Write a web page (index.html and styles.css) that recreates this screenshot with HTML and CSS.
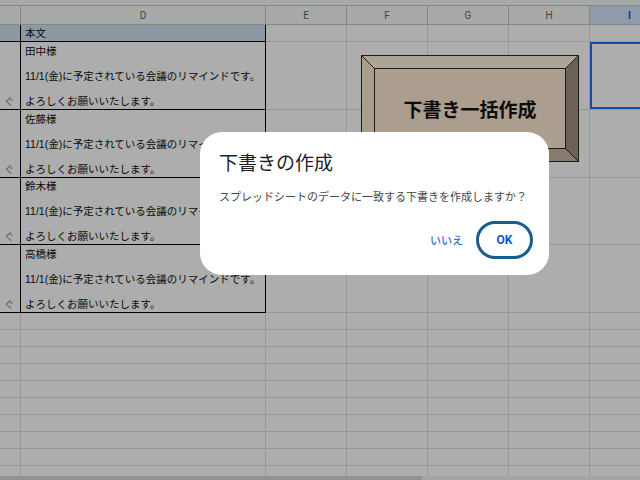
FILE: index.html
```html
<!DOCTYPE html>
<html lang="ja">
<head>
<meta charset="utf-8">
<title>下書きの作成</title>
<link rel="stylesheet" href="styles.css">
</head>
<body>
<div class="app">
  <div class="topstrip"></div>
  <div class="sheet">
    <table class="grid">
      <colgroup>
        <col class="w-c"><col class="w-d"><col class="w-e"><col class="w-f"><col class="w-g"><col class="w-h"><col class="w-i">
      </colgroup>
      <thead>
        <tr class="hdr"><th></th><th>D</th><th>E</th><th>F</th><th>G</th><th>H</th><th class="sel">I</th></tr>
      </thead>
      <tbody>
        <tr class="r"><td class="fr hd"></td><td class="fr hd">本文</td><td></td><td></td><td></td><td></td><td></td></tr>
        <tr class="tall"><td class="fr side">ぐ</td><td class="fr body">田中様<br><br>11/1(金)に予定されている会議のリマインドです。<br><br>よろしくお願いいたします。</td><td></td><td></td><td></td><td></td><td class="active"></td></tr>
        <tr class="tall"><td class="fr side">ぐ</td><td class="fr body">佐藤様<br><br>11/1(金)に予定されている会議のリマインドです。<br><br>よろしくお願いいたします。</td><td></td><td></td><td></td><td></td><td></td></tr>
        <tr class="tall t67"><td class="fr side">ぐ</td><td class="fr body">鈴木様<br><br>11/1(金)に予定されている会議のリマインドです。<br><br>よろしくお願いいたします。</td><td></td><td></td><td></td><td></td><td></td></tr>
        <tr class="tall"><td class="fr side">ぐ</td><td class="fr body">高橋様<br><br>11/1(金)に予定されている会議のリマインドです。<br><br>よろしくお願いいたします。</td><td></td><td></td><td></td><td></td><td></td></tr>
        <tr class="r"><td></td><td></td><td></td><td></td><td></td><td></td><td></td></tr>
        <tr class="r"><td></td><td></td><td></td><td></td><td></td><td></td><td></td></tr>
        <tr class="r"><td></td><td></td><td></td><td></td><td></td><td></td><td></td></tr>
        <tr class="r"><td></td><td></td><td></td><td></td><td></td><td></td><td></td></tr>
        <tr class="r"><td></td><td></td><td></td><td></td><td></td><td></td><td></td></tr>
        <tr class="r"><td></td><td></td><td></td><td></td><td></td><td></td><td></td></tr>
        <tr class="r"><td></td><td></td><td></td><td></td><td></td><td></td><td></td></tr>
        <tr class="r"><td></td><td></td><td></td><td></td><td></td><td></td><td></td></tr>
        <tr class="r"><td></td><td></td><td></td><td></td><td></td><td></td><td></td></tr>
        <tr class="r"><td></td><td></td><td></td><td></td><td></td><td></td><td></td></tr>
      </tbody>
    </table>
    <div class="drawing">
      <svg class="bevel" width="218" height="107" viewBox="0 0 218 107">
        <polygon points="0,0 218,0 205,13 13,13" fill="#fff0de"/>
        <polygon points="0,0 13,13 13,94 0,107" fill="#fbe7d1"/>
        <polygon points="218,0 218,107 205,94 205,13" fill="#9e9281"/>
        <polygon points="0,107 13,94 205,94 218,107" fill="#c6b6a1"/>
        <rect x="13" y="13" width="192" height="81" fill="#fce9d3"/>
        <g stroke="#2a2a2a" stroke-width="1" fill="none">
          <rect x="0.5" y="0.5" width="217" height="106"/>
          <rect x="13.5" y="13.5" width="191" height="80"/>
          <path d="M0.5 0.5 L13.5 13.5 M217.5 0.5 L204.5 13.5 M0.5 106.5 L13.5 93.5 M217.5 106.5 L204.5 93.5"/>
        </g>
      </svg>
      <span class="drawing-label">下書き一括作成</span>
    </div>
  </div>
  <div class="hscroll"><div class="thumb"></div></div>
</div>
<div class="scrim"></div>
<div class="dialog" role="dialog">
  <h2 class="dlg-title">下書きの作成</h2>
  <p class="dlg-msg">スプレッドシートのデータに一致する下書きを作成しますか？</p>
  <div class="dlg-actions">
    <button class="btn-text">いいえ</button>
    <button class="btn-ok">OK</button>
  </div>
</div>
</body>
</html>
```
FILE: styles.css
```css
body {
  margin: 0;
  font-family: "Liberation Sans", "Noto Sans CJK JP", sans-serif;
  background: #fff;
}

.app {
  width: 640px;
  height: 480px;
  display: flex;
  flex-direction: column;
  overflow: hidden;
  background: #fff;
}

.topstrip {
  flex: none;
  height: 5px;
  background: #f8f9fa;
  border-bottom: 1px solid #c4c7c5;
}

.sheet {
  flex: 1;
  position: relative;
  overflow: hidden;
}

.grid {
  border-collapse: separate;
  border-spacing: 0;
  table-layout: fixed;
  width: 670px;
}

.w-c { width: 21px; }
.w-d { width: 245px; }
.w-e { width: 81px; }
.w-f { width: 81px; }
.w-g { width: 81px; }
.w-h { width: 81px; }
.w-i { width: 80px; }

.grid th {
  height: 18px;
  padding: 0;
  font-family: Roboto, "Liberation Sans", sans-serif;
  font-size: 10px;
  font-weight: 400;
  color: #5f6368;
  background: #f8f9fa;
  border-right: 1px solid #c4c7c5;
  border-bottom: 1px solid #c4c7c5;
  text-align: center;
  vertical-align: middle;
}

.grid th.sel {
  background: #d3e3fd;
  color: #0b57d0;
  font-weight: 700;
}

.grid td {
  padding: 0 3px 2px 4px;
  border-right: 1px solid #e1e1e1;
  border-bottom: 1px solid #e1e1e1;
  vertical-align: bottom;
  font-size: 10.5px;
  line-height: 12.5px;
  color: #111;
  white-space: nowrap;
  overflow: hidden;
}

.grid tr.r { height: 17px; }
.grid tr.tall { height: 68px; }
.grid tr.t67 { height: 67px; }

.grid td.fr {
  border-right-color: #000;
  border-bottom-color: #000;
}

.grid td.hd {
  background: #cfe2f3;
}

.grid td.side {
  text-align: right;
  padding-right: 14px;
  color: #888;
}

.grid td.active {
  box-shadow: inset 0 0 0 2px #1a73e8;
}

.drawing {
  position: absolute;
  left: 361px;
  top: 49px;
  width: 218px;
  height: 107px;
  display: flex;
  align-items: center;
  justify-content: center;
}

.bevel {
  position: absolute;
  left: 0;
  top: 0;
}

.drawing-label {
  position: relative;
  font-family: "Noto Sans CJK JP", sans-serif;
  font-size: 19px;
  font-weight: 700;
  color: #111;
}

.hscroll {
  flex: none;
  height: 4px;
  background: #f2f2f2;
}

.thumb {
  width: 422px;
  height: 4px;
  background: #d8d8d8;
}

.scrim {
  position: fixed;
  inset: 0;
  background: rgba(0, 0, 0, 0.32);
}

.dialog {
  position: fixed;
  left: 200px;
  top: 132px;
  width: 349px;
  height: 143px;
  box-sizing: border-box;
  padding: 20px 16px 16px 19px;
  background: #fff;
  border-radius: 22px;
  display: flex;
  flex-direction: column;
  font-family: Roboto, "Noto Sans CJK JP", sans-serif;
}

.dlg-title {
  margin: 0;
  font-size: 19px;
  line-height: 24px;
  font-weight: 400;
  color: #1f1f1f;
}

.dlg-msg {
  margin: 14px 0 0;
  font-size: 11px;
  line-height: 16px;
  color: #444746;
}

.dlg-actions {
  margin-top: auto;
  display: flex;
  justify-content: flex-end;
  align-items: center;
  gap: 5px;
}

.btn-text {
  height: 38px;
  padding: 0 8px;
  border: none;
  background: none;
  font-family: Roboto, "Noto Sans CJK JP", sans-serif;
  font-size: 11px;
  font-weight: 500;
  color: #2f6fd6;
}

.btn-ok {
  width: 57px;
  height: 38px;
  box-sizing: border-box;
  border: 3px solid #155e8f;
  border-radius: 19px;
  background: #fff;
  font-family: Roboto, "Noto Sans CJK JP", sans-serif;
  font-size: 12px;
  font-weight: 700;
  color: #0b57d0;
}
```
